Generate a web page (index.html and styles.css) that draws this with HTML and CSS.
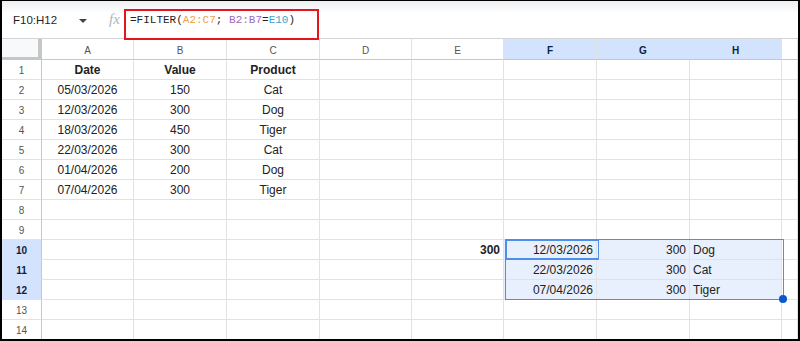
FILE: index.html
```html
<!DOCTYPE html>
<html>
<head>
<meta charset="utf-8">
<title>FILTER</title>
<link rel="stylesheet" href="styles.css">
</head>
<body>

<div class="frame">
	<!-- formula bar -->
	<div class="fbar">
		<div class="namebox">F10:H12</div>
		<div class="caret"></div>
		<div class="fx">fx</div>
		<div class="formula">=FILTER(<span class="r1">A2:C7</span>; <span class="r2">B2:B7</span>=<span class="r3">E10</span>)</div>
		<div class="mark"></div>
	</div>

	<!-- grid -->
	<div class="sheet">
		<div class="corner"></div>
		<div class="colh">A</div><div class="colh">B</div><div class="colh">C</div><div class="colh">D</div>
		<div class="colh">E</div><div class="colh sel">F</div><div class="colh sel">G</div><div class="colh sel">H</div>
		<div class="colh"></div>

		<div class="rowh">1</div><div class="c b">Date</div><div class="c b">Value</div><div class="c b">Product</div><div></div><div></div><div></div><div></div><div></div><div></div>
		<div class="rowh">2</div><div class="c">05/03/2026</div><div class="c">150</div><div class="c">Cat</div><div></div><div></div><div></div><div></div><div></div><div></div>
		<div class="rowh">3</div><div class="c">12/03/2026</div><div class="c">300</div><div class="c">Dog</div><div></div><div></div><div></div><div></div><div></div><div></div>
		<div class="rowh">4</div><div class="c">18/03/2026</div><div class="c">450</div><div class="c">Tiger</div><div></div><div></div><div></div><div></div><div></div><div></div>
		<div class="rowh">5</div><div class="c">22/03/2026</div><div class="c">300</div><div class="c">Cat</div><div></div><div></div><div></div><div></div><div></div><div></div>
		<div class="rowh">6</div><div class="c">01/04/2026</div><div class="c">200</div><div class="c">Dog</div><div></div><div></div><div></div><div></div><div></div><div></div>
		<div class="rowh">7</div><div class="c">07/04/2026</div><div class="c">300</div><div class="c">Tiger</div><div></div><div></div><div></div><div></div><div></div><div></div>
		<div class="rowh">8</div><div></div><div></div><div></div><div></div><div></div><div></div><div></div><div></div><div></div>
		<div class="rowh">9</div><div></div><div></div><div></div><div></div><div></div><div></div><div></div><div></div><div></div>
		<div class="rowh sel">10</div><div></div><div></div><div></div><div></div><div class="r b">300</div><div class="r hl">12/03/2026</div><div class="r hl">300</div><div class="l hl">Dog</div><div></div>
		<div class="rowh sel">11</div><div></div><div></div><div></div><div></div><div></div><div class="r hl">22/03/2026</div><div class="r hl">300</div><div class="l hl">Cat</div><div></div>
		<div class="rowh sel">12</div><div></div><div></div><div></div><div></div><div></div><div class="r hl">07/04/2026</div><div class="r hl">300</div><div class="l hl">Tiger</div><div></div>
		<div class="rowh">13</div><div></div><div></div><div></div><div></div><div></div><div></div><div></div><div></div><div></div>
		<div class="rowh">14</div><div></div><div></div><div></div><div></div><div></div><div></div><div></div><div></div><div></div>

		<!-- selection overlay -->
		<div class="range"></div>
		<div class="active"></div>
		<div class="handle"></div>
	</div>
</div>

</body>
</html>
```

FILE: styles.css
```css
body {
  margin: 0;
  font-family: "Liberation Sans", Arial, sans-serif;
  color: #222;
}

.frame {
  width: 800px;
  height: 341px;
  box-sizing: border-box;
  border: 2px solid #000;
  border-top-width: 1px;
  overflow: hidden;
  background: #fff;
}


/* formula bar */
.fbar {
  position: relative;
  height: 38px;
  box-sizing: border-box;
  border-bottom: 1px solid #d4d4d4;
  background: linear-gradient(#eceef0, #fff 12px);
  display: flex;
  align-items: center;
}
.namebox {
  font-size: 11.5px;
  margin-left: 11px;
  width: 66px;
  color: #1f1f1f;
}
.caret {
  width: 0;
  height: 0;
  border-left: 4px solid transparent;
  border-right: 4px solid transparent;
  border-top: 4px solid #444;
  margin-top: 2px;
}
.fx {
  font-family: "Liberation Serif", serif;
  font-style: italic;
  font-size: 15px;
  color: #b5b5b5;
  margin-left: 22px;
  width: 21px;
}
.formula {
  font-family: "Liberation Mono", monospace;
  font-size: 11px;
  color: #222;
}
.r1 { color: #e9a04c; }
.r2 { color: #9a6bbd; }
.r3 { color: #3aa7c9; }

.mark {
  position: absolute;
  left: 122px;
  top: 8px;
  width: 191px;
  height: 27px;
  border: 2px solid #e8141b;
  z-index: 2;
}


/* grid */
.sheet {
  position: relative;
  display: grid;
  grid-template-columns: 40px 92px 93px 93px 92px 92px 93px 93px 92px 1fr;
  grid-template-rows: 21px repeat(14, 20px);
  font-size: 12px;
}
.sheet > div {
  box-sizing: border-box;
  border-right: 1px solid #e2e2e2;
  border-bottom: 1px solid #e2e2e2;
  padding-top: 2px;
  line-height: 17px;
  white-space: nowrap;
  overflow: hidden;
}
.sheet .corner {
  background: #f8f9fa;
  border-right: 4px solid #c4c7c5;
  border-bottom: 3px solid #c4c7c5;
}
.sheet .colh {
  text-align: center;
  font-size: 10px;
  color: #555;
  line-height: 19px;
  border-bottom-color: #c4c7c5;
}
.sheet .rowh {
  text-align: center;
  font-size: 10px;
  color: #555;
  border-right-color: #c4c7c5;
}
.sheet .sel {
  background: #d3e3fd;
  color: #0b1f44;
  font-weight: bold;
}
.c { text-align: center; }
.sheet .r { text-align: right; padding-right: 3px; }
.sheet .l { text-align: left; padding-left: 3px; }
.b { font-weight: bold; }
.sheet .hl { background: #e8f0fd; }

.sheet .range {
  position: absolute;
  left: 503px;
  top: 200px;
  width: 279px;
  height: 61px;
  padding: 0;
  border: 1px solid #4d8fe8;
}
.sheet .active {
  position: absolute;
  left: 503px;
  top: 200px;
  width: 94px;
  height: 21px;
  padding: 0;
  border: 2px solid #4d8fe8;
  border-right-width: 1px;
}
.sheet .handle {
  position: absolute;
  left: 777px;
  top: 256px;
  width: 8px;
  height: 8px;
  padding: 0;
  border-radius: 50%;
  background: #0b57d0;
  border: none;
}
```
